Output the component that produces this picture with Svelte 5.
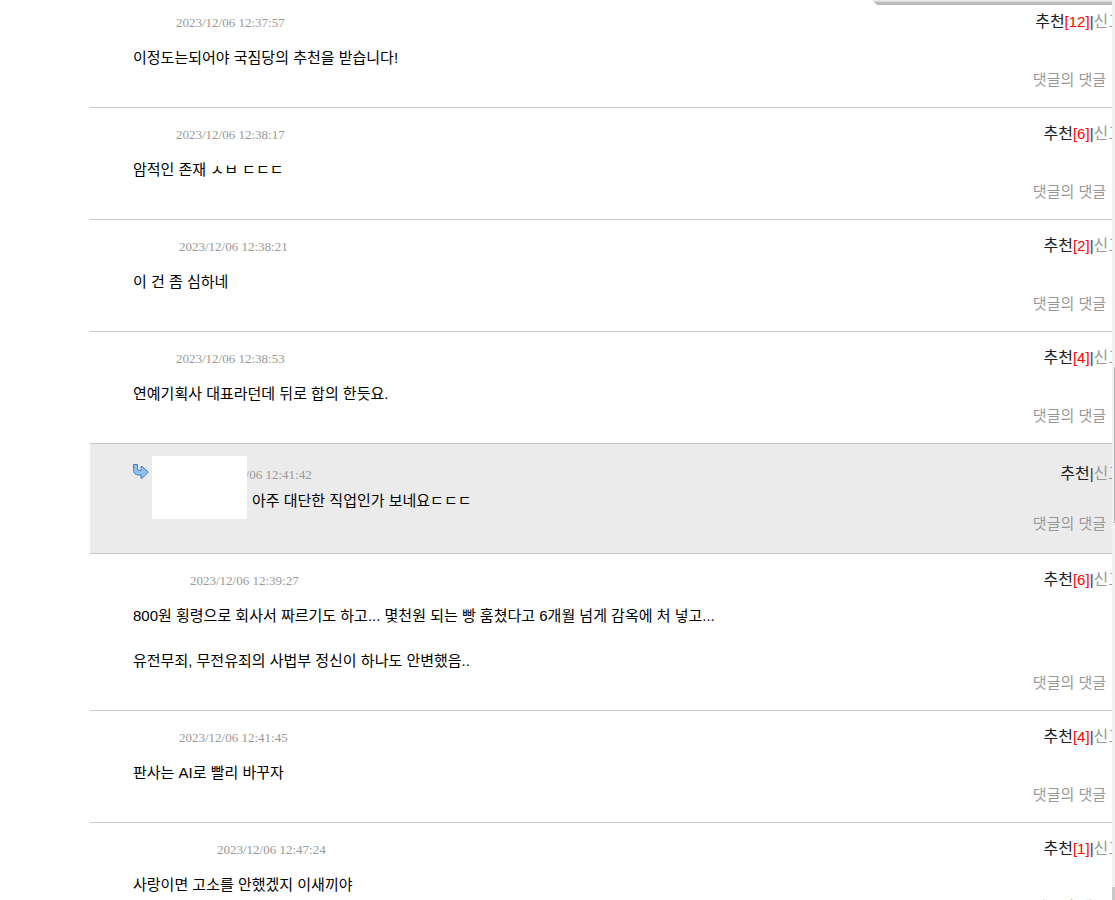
<script lang="ts">
	type Comment = {
		date: string;
		nick: number;
		votes?: number;
		lines: string[];
		reply?: boolean;
	};

	// nick = width of the hidden nickname in front of the date
	const comments: Comment[] = [
		{ date: '2023/12/06 12:37:57', nick: 43, votes: 12, lines: ['이정도는되어야 국짐당의 추천을 받습니다!'] },
		{ date: '2023/12/06 12:38:17', nick: 43, votes: 6, lines: ['암적인 존재 ㅅㅂ ㄷㄷㄷ'] },
		{ date: '2023/12/06 12:38:21', nick: 46, votes: 2, lines: ['이 건 좀 심하네'] },
		{ date: '2023/12/06 12:38:53', nick: 43, votes: 4, lines: ['연예기획사 대표라던데 뒤로 합의 한듯요.'] },
		{ date: '2023/12/06 12:41:42', nick: 47, lines: ['아주 대단한 직업인가 보네요ㄷㄷㄷ'], reply: true },
		{
			date: '2023/12/06 12:39:27',
			nick: 57,
			votes: 6,
			lines: [
				'800원 횡령으로 회사서 짜르기도 하고... 몇천원 되는 빵 훔쳤다고 6개월 넘게 감옥에 처 넣고...',
				'유전무죄, 무전유죄의 사법부 정신이 하나도 안변했음..'
			]
		},
		{ date: '2023/12/06 12:41:45', nick: 46, votes: 4, lines: ['판사는 AI로 빨리 바꾸자'] },
		{ date: '2023/12/06 12:47:24', nick: 84, votes: 1, lines: ['사랑이면 고소를 안했겠지 이새끼야'] }
	];
</script>

<div class="page">
	<main class="comments">
		<div class="tab"></div>
		{#each comments as c}
			<article class="comment" class:reply={c.reply}>
				{#if c.reply}
					<svg class="arrow" width="16" height="16" viewBox="0 0 16 16" aria-hidden="true">
						<path
							d="M.5 1.500h4v4.500q0 1.500 2.500 1.500h1V3.500h1.200l6 5.500-6 6.300H8v-3.300H6Q.5 12 .5 6.500z"
							fill="#8fc0ee"
							stroke="#3f7fcb"
						/>
					</svg>
				{/if}
				<div class="body">
					<div class="meta">
						<span class="nick" style="width: {c.nick}px"></span>
						<time>{c.date}</time>
					</div>
					<div class="text">
						{#each c.lines as line}
							<p>{line}</p>
						{/each}
					</div>
					{#if c.reply}<div class="cover"></div>{/if}
				</div>
				<div class="side">
					<div class="actions">
						<button class="vote">추천</button>{#if c.votes}<span class="count">[{c.votes}]</span>{/if}<span>|</span><button class="report">신고</button>
					</div>
					<a class="answer" href="#reply">댓글의 댓글</a>
				</div>
			</article>
		{/each}
	</main>
	<div class="scroll">
		<div class="thumb"></div>
		<div class="foot"></div>
	</div>
</div>

<style>
	:global(body) {
		margin: 0;
		background: #fff;
	}
	.page {
		display: flex;
		height: 100vh;
		overflow: hidden;
		font-family: 'Liberation Sans', 'Noto Sans CJK KR', sans-serif;
		font-size: 15px;
		color: #000;
	}
	.comments {
		position: relative;
		flex: 1;
		min-width: 0;
		margin-top: -4px;
		padding-left: 90px;
		overflow: hidden;
	}
	.tab {
		position: absolute;
		top: 4px;
		right: 0;
		width: 240px;
		height: 5px;
		background: linear-gradient(#e9e9e9 0 1px, #d8d8d8 1px 2px, #bbb 2px);
		clip-path: polygon(0 0, 100% 0, 100% 100%, 5px 100%);
	}
	.comment {
		display: flex;
		border-bottom: 1px solid #c8c8c8;
	}
	.body {
		position: relative;
		flex: 1;
		min-width: 0;
		padding: 16px 0 38px 43px;
	}
	.meta {
		display: flex;
		line-height: 22px;
		font-family: 'Liberation Serif', serif;
		font-size: 13px;
		color: #999;
	}
	.nick {
		flex: none;
	}
	.text {
		display: flex;
		flex-direction: column;
		gap: 22px;
		margin-top: 12px;
	}
	p {
		margin: 0;
		line-height: 23px;
	}
	.side {
		display: flex;
		flex-direction: column;
		justify-content: space-between;
		align-items: flex-end;
		padding: 15px 6px 16px 0;
		line-height: 22px;
		white-space: nowrap;
		color: #333;
	}
	.actions {
		display: flex;
		margin-right: -17px;
	}
	button {
		padding: 0;
		border: 0;
		background: none;
		font: inherit;
		font-size: 16px;
		cursor: pointer;
	}
	.vote {
		color: #222;
	}
	.count {
		color: #f00;
	}
	.report,
	.answer {
		color: #999;
		text-decoration: none;
	}

	.reply {
		background: #ebebeb;
	}
	.reply .arrow {
		flex: none;
		margin: 19px 0 0 43px;
	}
	.reply .body {
		padding: 20px 0 41px 7px;
	}
	.reply .text {
		margin: 3px 0 0 96px;
	}
	.reply .side {
		padding: 19px 6px 18px 0;
	}
	.cover {
		position: absolute;
		top: 12px;
		left: 3px;
		width: 95px;
		height: 63px;
		background: #fff;
	}

	.scroll {
		display: flex;
		flex-direction: column;
		flex: none;
		width: 3px;
		background: #f1f1f1;
	}
	.thumb {
		width: 1px;
		height: 156px;
		margin: 367px 0 auto 2px;
		background: #b4b4b4;
	}
	.foot {
		height: 13px;
		background: #c8c8c8;
	}
</style>
